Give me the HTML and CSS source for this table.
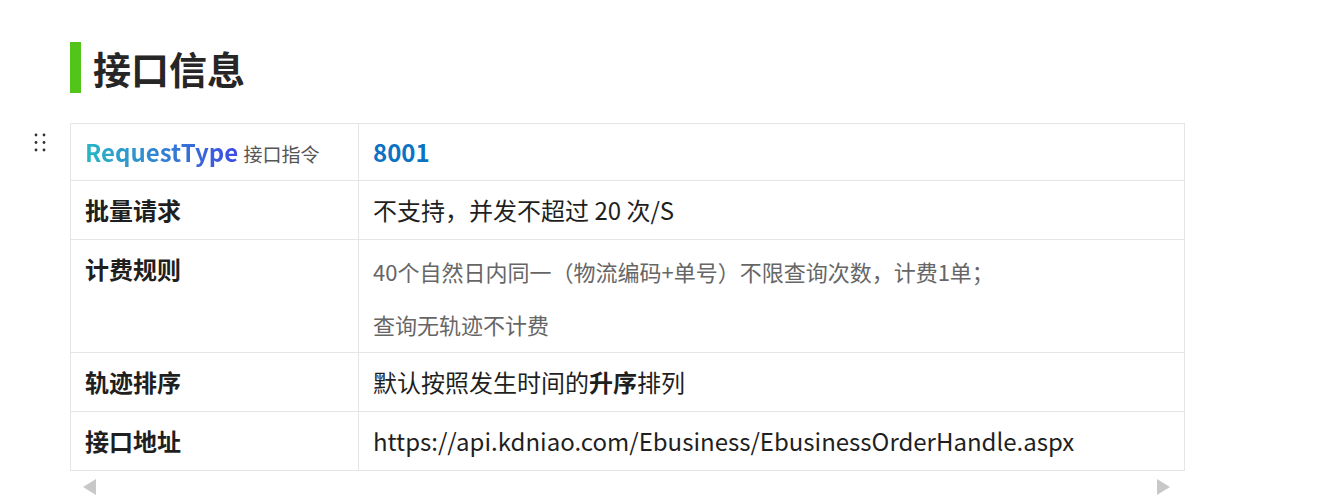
FILE: index.html
```html
<!DOCTYPE html>
<html lang="zh-CN">
<head>
    <meta charset="UTF-8">
    <title>接口信息</title>
    <link rel="stylesheet" href="styles.css">
</head>
<body>
    <div class="page">
        <h2 class="section-title">接口信息</h2>

        <div class="block">
            <span class="drag-handle">
                <svg width="12" height="19" viewBox="0 0 12 19">
                    <circle cx="2" cy="2" r="1.4"/><circle cx="10" cy="2" r="1.4"/>
                    <circle cx="2" cy="9.5" r="1.4"/><circle cx="10" cy="9.5" r="1.4"/>
                    <circle cx="2" cy="17" r="1.4"/><circle cx="10" cy="17" r="1.4"/>
                </svg>
            </span>
            <div class="table-wrap">
                <table class="info-table">
                    <tr class="head-row">
                        <td class="key"><span class="grad">RequestType</span> <span class="sub">接口指令</span></td>
                        <td class="val"><span class="code">8001</span></td>
                    </tr>
                    <tr>
                        <td class="key">批量请求</td>
                        <td class="val">不支持，并发不超过 20 次/S</td>
                    </tr>
                    <tr>
                        <td class="key">计费规则</td>
                        <td class="val muted">
                            <p>40个自然日内同一（物流编码+单号）不限查询次数，计费1单；</p>
                            <p>查询无轨迹不计费</p>
                        </td>
                    </tr>
                    <tr>
                        <td class="key">轨迹排序</td>
                        <td class="val">默认按照发生时间的<b>升序</b>排列</td>
                    </tr>
                    <tr>
                        <td class="key">接口地址</td>
                        <td class="val">https://api.kdniao.com/Ebusiness/EbusinessOrderHandle.aspx</td>
                    </tr>
                </table>
                <div class="scrollbar">
                    <span class="arrow left"></span>
                    <span class="arrow right"></span>
                </div>
            </div>
        </div>
    </div>
</body>
</html>
```

FILE: styles.css
```css
body {
    margin: 0;
    background: #fff;
    font-family: "Noto Sans CJK SC", sans-serif;
    color: #1f1f1f;
}
.page {
    padding: 42px 0 0 70px;
    width: 1115px;
}
.section-title {
    margin: 0 0 30px;
    border-left: 11px solid #52c41a;
    padding-left: 12px;
    font-size: 38px;
    line-height: 51px;
    font-weight: 700;
    color: #262626;
}
.block {
    position: relative;
}
.drag-handle {
    position: absolute;
    left: -36px;
    top: 10px;
}
.drag-handle svg {
    display: block;
    fill: #333;
}
.info-table {
    width: 100%;
    border-collapse: collapse;
    font-size: 24px;
}
.info-table td {
    border: 1px solid #e5e5e5;
    padding: 11px 14px 11px;
    vertical-align: top;
    line-height: 36px;
}
.info-table .head-row td {
    padding-top: 10px;
    padding-bottom: 10px;
}
.info-table .key {
    width: 259px;
    font-weight: 700;
}
.grad {
    background: linear-gradient(90deg, #27b7c4, #3e4be2);
    -webkit-background-clip: text;
    background-clip: text;
    color: transparent;
}
.sub {
    font-size: 19px;
    line-height: 1;
    font-weight: 400;
    color: #555;
}
.code {
    color: #0c72c4;
    font-weight: 700;
}
.info-table .muted {
    color: #666;
    font-size: 22px;
    padding-top: 11px;
    padding-bottom: 8px;
}
.muted p {
    margin: 0 0 13px;
    line-height: 40px;
}
.muted p:last-child {
    margin-bottom: 0;
}
.scrollbar {
    display: flex;
    justify-content: space-between;
    padding: 8px 15px 0 13px;
}
.arrow {
    width: 0;
    height: 0;
    border-top: 8px solid transparent;
    border-bottom: 8px solid transparent;
}
.arrow.left {
    border-right: 13px solid #c8c8c8;
}
.arrow.right {
    border-left: 13px solid #c8c8c8;
}
```
